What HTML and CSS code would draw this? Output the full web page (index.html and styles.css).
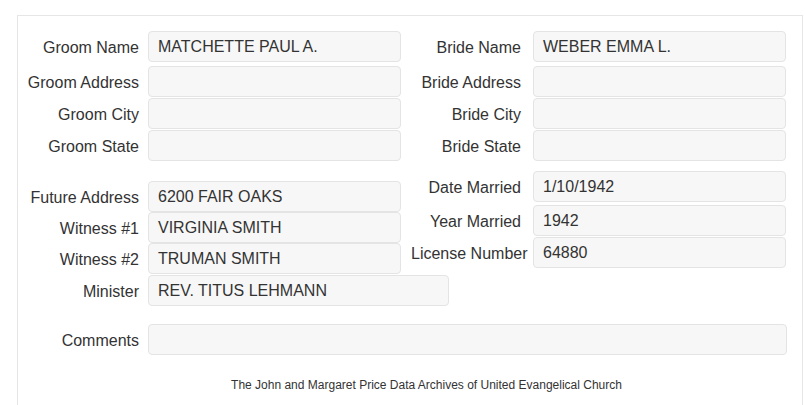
FILE: index.html
```html
<!DOCTYPE html>
<html>
<head>
<meta charset="utf-8">
<link rel="stylesheet" href="styles.css">
</head>
<body>
<div class="panel">
  <div class="section top">
    <div class="col left">
      <div class="row"><label>Groom Name</label><div class="field">MATCHETTE PAUL A.</div></div>
      <div class="row m4"><label>Groom Address</label><div class="field"></div></div>
      <div class="row m1"><label>Groom City</label><div class="field"></div></div>
      <div class="row m1"><label>Groom State</label><div class="field"></div></div>
    </div>
    <div class="col right">
      <div class="row"><label>Bride Name</label><div class="field">WEBER EMMA L.</div></div>
      <div class="row m4"><label>Bride Address</label><div class="field"></div></div>
      <div class="row m1"><label>Bride City</label><div class="field"></div></div>
      <div class="row m1"><label>Bride State</label><div class="field"></div></div>
    </div>
  </div>
  <div class="section mid">
    <div class="col left pad10">
      <div class="row"><label>Future Address</label><div class="field">6200 FAIR OAKS</div></div>
      <div class="row"><label>Witness #1</label><div class="field">VIRGINIA SMITH</div></div>
      <div class="row"><label>Witness #2</label><div class="field">TRUMAN SMITH</div></div>
      <div class="row m1"><label>Minister</label><div class="field wide">REV. TITUS LEHMANN</div></div>
    </div>
    <div class="col right">
      <div class="row"><label>Date Married</label><div class="field">1/10/1942</div></div>
      <div class="row m3"><label>Year Married</label><div class="field">1942</div></div>
      <div class="row m1"><label>License Number</label><div class="field">64880</div></div>
    </div>
  </div>
  <div class="row comments"><label>Comments</label><div class="field full"></div></div>
  <p class="footer">The John and Margaret Price Data Archives of United Evangelical Church</p>
</div>
</body>
</html>
```

FILE: styles.css
```css
html, body {
  margin: 0;
  padding: 0;
  background: #ffffff;
}
body {
  font-family: "Liberation Sans", Arial, sans-serif;
  font-size: 16px;
  color: #333333;
}
.panel {
  margin: 15px 2px 0 17px;
  border: 1px solid #e6e6e6;
  border-bottom: none;
  padding: 15px 15px 20px 0;
  min-height: 400px;
  box-sizing: border-box;
}
.section {
  display: grid;
  grid-template-columns: 393px 1fr;
}
.mid {
  margin-top: 10px;
}
.pad10 {
  padding-top: 10px;
}
.row {
  display: flex;
  align-items: center;
}
.m1 { margin-top: 1px; }
.m3 { margin-top: 3px; }
.m4 { margin-top: 4px; }
label {
  display: block;
  text-align: right;
  line-height: 29px;
  padding-top: 2px;
  white-space: nowrap;
  flex: none;
}
.left label {
  width: 121px;
  margin-right: 9px;
}
.right label {
  width: 110px;
  margin-right: 12px;
}
.field {
  width: 253px;
  height: 31px;
  box-sizing: border-box;
  background: #f7f7f7;
  border: 1px solid #e4e4e4;
  border-radius: 4px;
  padding: 1px 9px 0;
  line-height: 28px;
  color: #333333;
  flex: none;
}
.field.wide {
  width: 301px;
}
.comments {
  margin-top: 18px;
}
.comments label {
  width: 121px;
  margin-right: 9px;
}
.field.full {
  flex: 1;
  width: auto;
}
.footer {
  margin: 23px 0 0 0;
  padding-left: 48px;
  text-align: center;
  font-size: 12px;
  line-height: 14px;
  color: #333333;
}
```
